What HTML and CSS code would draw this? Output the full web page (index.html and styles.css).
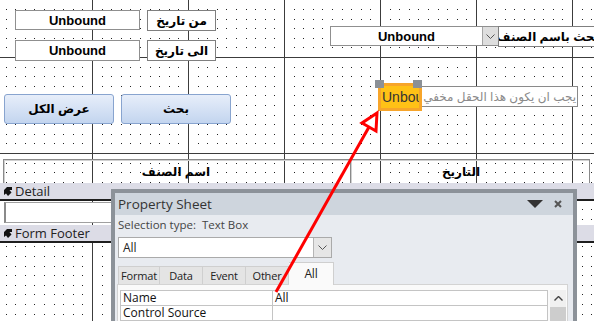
FILE: index.html
```html
<!DOCTYPE html>
<html>
    <head>
        <title>Form Design View</title>
        <meta charset="utf-8"/>
        <link rel="stylesheet" href="styles.css">
    </head>
    <body>
        <svg class="defs" width="0" height="0">
            <defs>
                <g id="dotRow">
                    <rect x="0" y="0" width="1" height="1"/><rect x="10" y="0" width="1" height="1"/>
                    <rect x="19" y="0" width="1" height="1"/><rect x="29" y="0" width="1" height="1"/>
                    <rect x="38" y="0" width="1" height="1"/><rect x="48" y="0" width="1" height="1"/>
                    <rect x="58" y="0" width="1" height="1"/><rect x="67" y="0" width="1" height="1"/>
                    <rect x="77" y="0" width="1" height="1"/><rect x="86" y="0" width="1" height="1"/>
                </g>
                <g id="dotTile" fill="#222">
                    <use href="#dotRow"/><use href="#dotRow" y="10"/><use href="#dotRow" y="19"/>
                    <use href="#dotRow" y="29"/><use href="#dotRow" y="38"/><use href="#dotRow" y="48"/>
                    <use href="#dotRow" y="58"/><use href="#dotRow" y="67"/><use href="#dotRow" y="77"/>
                    <use href="#dotRow" y="86"/>
                </g>
                <pattern id="gridHead" x="92" y="57" width="96" height="96" patternUnits="userSpaceOnUse">
                    <use href="#dotTile"/>
                    <rect x="0" y="0" width="1" height="96" fill="#3c3c3c"/>
                    <rect x="0" y="0" width="96" height="1" fill="#3c3c3c"/>
                </pattern>
                <pattern id="gridDetail" x="92" y="8" width="96" height="96" patternUnits="userSpaceOnUse">
                    <use href="#dotTile"/>
                    <rect x="0" y="-8" width="1" height="120" fill="#3c3c3c"/>
                </pattern>
                <pattern id="gridFoot" x="92" y="13" width="96" height="96" patternUnits="userSpaceOnUse">
                    <use href="#dotTile"/>
                    <rect x="0" y="-13" width="1" height="120" fill="#3c3c3c"/>
                </pattern>
            </defs>
        </svg>

        <div class="design">
            <div class="section header">
                <svg class="grid" width="594" height="183"><rect width="594" height="183" fill="url(#gridHead)"/></svg>

                <div class="ctl txt tb-from">Unbound</div>
                <div class="ctl lbl lb-from">من تاريخ</div>
                <div class="ctl txt tb-to">Unbound</div>
                <div class="ctl lbl lb-to">الى تاريخ</div>

                <div class="ctl btn btn-all">عرض الكل</div>
                <div class="ctl btn btn-search">بحث</div>

                <div class="ctl combo">
                    <span class="combo-val">Unbound</span>
                    <span class="combo-drop">
                        <svg width="9" height="5" viewBox="0 0 9 5"><path d="M0.5 0.5 L4.5 4.5 L8.5 0.5" fill="none" stroke="#555" stroke-width="1"/></svg>
                    </span>
                </div>
                <div class="ctl lbl lb-cat">بحث باسم الصنف</div>

                <div class="ctl lbl lb-hint">يجب ان يكون هذا الحقل مخفي</div>
                <div class="ctl sel">
                    <span class="sel-fill">Unbound</span>
                    <span class="handle h-left"></span>
                    <span class="handle h-right"></span>
                </div>

                <div class="frame frame-a"></div>
                <div class="frame frame-b"></div>
                <div class="ctl col-lbl col-name">اسم الصنف</div>
                <div class="ctl col-lbl col-date">التاريخ</div>
            </div>

            <div class="bar">
                <svg class="bar-icon" width="10" height="9" viewBox="0 0 10 9"><path d="M1 3 L4 0 L9 0 L9 3 L6.5 3 L8.5 5.5 L5 9 L3 6.5 L1 8 Z" fill="#111"/></svg>
                Detail
            </div>
            <div class="section detail">
                <svg class="grid" width="594" height="24"><rect width="594" height="24" fill="url(#gridDetail)"/></svg>
                <div class="detail-box"></div>
            </div>

            <div class="bar">
                <svg class="bar-icon" width="10" height="9" viewBox="0 0 10 9"><path d="M1 3 L4 0 L9 0 L9 3 L6.5 3 L8.5 5.5 L5 9 L3 6.5 L1 8 Z" fill="#111"/></svg>
                Form Footer
            </div>
            <div class="section footer">
                <svg class="grid" width="594" height="90"><rect width="594" height="90" fill="url(#gridFoot)"/></svg>
            </div>

            <div class="props">
                <div class="props-title">
                    <span>Property Sheet</span>
                    <span class="props-tools">
                        <svg width="16" height="8" viewBox="0 0 16 8"><path d="M0 0 H16 L8 8 Z" fill="#333"/></svg>
                        <svg width="8" height="8" viewBox="0 0 8 8"><path d="M1 1 L7 7 M7 1 L1 7" stroke="#555" stroke-width="2"/></svg>
                    </span>
                </div>
                <div class="sel-type">Selection type:&nbsp; Text Box</div>
                <div class="props-combo">
                    <span class="combo-val">All</span>
                    <span class="combo-drop">
                        <svg width="9" height="5" viewBox="0 0 9 5"><path d="M0.5 0.5 L4.5 4.5 L8.5 0.5" fill="none" stroke="#555" stroke-width="1"/></svg>
                    </span>
                </div>
                <div class="tabs">
                    <span class="tab t-format">Format</span>
                    <span class="tab">Data</span>
                    <span class="tab">Event</span>
                    <span class="tab">Other</span>
                    <span class="tab active">All</span>
                </div>
                <div class="pane">
                    <div class="prop-grid">
                        <div class="prop-row"><span>Name</span><span>All</span></div>
                        <div class="prop-row"><span>Control Source</span><span></span></div>
                        <div class="prop-row"><span></span><span></span></div>
                    </div>
                    <div class="scroll">
                        <span class="scroll-up">
                            <svg width="9" height="5" viewBox="0 0 9 5"><path d="M0.5 4.5 L4.5 0.5 L8.5 4.5" fill="none" stroke="#444" stroke-width="1.4"/></svg>
                        </span>
                        <span class="thumb"></span>
                    </div>
                </div>
            </div>

            <svg class="arrow" width="594" height="321">
                <line x1="276" y1="292" x2="369" y2="127" stroke="#f00" stroke-width="3"/>
                <polygon points="377,113 362,123 376,131" fill="#fff" stroke="#f00" stroke-width="3"/>
            </svg>
        </div>
    </body>
</html>
```

FILE: styles.css
```css
*{
    box-sizing: border-box;
}
body{
    margin: 0;
}
.defs{
    position: absolute;
}
.design{
    position: relative;
    width: 594px;
    height: 321px;
    overflow: hidden;
    background: #fff;
    font-family: "Liberation Sans", "DejaVu Sans", sans-serif;
}
.section{
    position: relative;
    background: #fff;
    overflow: hidden;
}
.grid{
    position: absolute;
    left: 0;
    top: 0;
    shape-rendering: crispEdges;
}
.header{
    height: 183px;
}
.detail{
    height: 26px;
    border-top: 2px solid #1e1e1e;
}
.footer{
    height: 96px;
    border-top: 2px solid #1e1e1e;
}

/* section bars */
.bar{
    height: 16px;
    display: flex;
    align-items: center;
    gap: 2px;
    padding-left: 3px;
    background: #dcdce6;
    color: #222;
    font: 13px "Open Sans", sans-serif;
}
.bar-icon{
    flex: none;
}

/* controls on the design canvas */
.ctl{
    position: absolute;
    display: flex;
    align-items: center;
    justify-content: center;
    font-size: 13px;
    font-weight: bold;
    color: #000;
    white-space: nowrap;
    overflow: hidden;
}
.txt{
    background: #fff;
    border: 1px solid #8f8f8f;
}
.lbl{
    background: #fff;
    border: 1px solid #7f7f7f;
    direction: rtl;
    font-size: 12px;
}
.tb-from{ left: 15px; top: 10px; width: 125px; height: 20px; }
.lb-from{ left: 147px; top: 10px; width: 69px; height: 21px; }
.tb-to{ left: 15px; top: 40px; width: 125px; height: 21px; }
.lb-to{ left: 147px; top: 40px; width: 69px; height: 21px; }

.btn{
    border: 1px solid #88a4cf;
    border-radius: 3px;
    background: linear-gradient(#e7eefa, #c3d5ef);
    font-size: 12px;
}
.btn-all{ left: 4px; top: 94px; width: 110px; height: 30px; }
.btn-search{ left: 121px; top: 94px; width: 110px; height: 30px; }

.combo{
    left: 330px;
    top: 26px;
    width: 169px;
    height: 20px;
    background: #fff;
    border: 1px solid #8f8f8f;
    justify-content: flex-start;
}
.combo-val{
    flex: 1;
    text-align: center;
}
.combo-drop{
    width: 16px;
    height: 100%;
    display: flex;
    align-items: center;
    justify-content: center;
    background: #dedede;
    border-left: 1px solid #a5a5a5;
}
.lb-cat{
    left: 498px;
    top: 26px;
    width: 104px;
    height: 21px;
    justify-content: flex-start;
    padding-right: 2px;
}

.lb-hint{
    left: 420px;
    top: 86px;
    width: 158px;
    height: 21px;
    border-color: #8a8a8a;
    color: #8a8a8a;
    font-weight: normal;
    font-size: 12px;
    justify-content: flex-start;
    padding-right: 1px;
}
.sel{
    left: 378px;
    top: 83px;
    width: 44px;
    height: 28px;
    overflow: visible;
    background: #f7a52a;
    padding: 3px;
}
.sel-fill{
    display: block;
    width: 38px;
    height: 22px;
    background: #ffc116;
    color: #333;
    font-size: 14px;
    font-weight: normal;
    line-height: 22px;
    padding-left: 1px;
    overflow: hidden;
}
.handle{
    position: absolute;
    top: -3px;
    width: 9px;
    height: 8px;
    background: #8b9096;
}
.h-left{ left: -3px; }
.h-right{ right: 0; }

.frame{
    position: absolute;
    top: 159px;
    height: 26px;
    border-top: 1px solid #8a8a8a;
    border-left: 1px solid #8a8a8a;
    box-shadow: inset 1px 1px 0 #d0d0d0;
}
.frame-a{ left: 3px; width: 347px; }
.frame-b{ left: 350px; width: 240px; border-right: 1px solid #8a8a8a; }
.col-lbl{
    top: 163px;
    height: 17px;
    width: 100px;
    direction: rtl;
    font-size: 12px;
}
.col-name{ left: 126px; }
.col-date{ left: 411px; }

.detail-box{
    position: absolute;
    left: 4px;
    top: 1px;
    width: 560px;
    height: 21px;
    background: #fff;
    border: 1px solid #a0a0a0;
    border-left: 2px solid #8a8a8a;
}

/* property sheet window */
.props{
    position: absolute;
    left: 111px;
    top: 189px;
    width: 466px;
    height: 140px;
    border: 4px solid #8c9299;
    border-bottom: 0;
    background: #e8ebf0;
    font-family: "Open Sans", sans-serif;
    color: #333;
}
.props-title{
    height: 22px;
    display: flex;
    align-items: center;
    justify-content: space-between;
    padding: 0 11px 0 3px;
    background: #ced5dd;
    font-size: 13.5px;
}
.props-tools{
    display: flex;
    align-items: center;
    gap: 11px;
}
.sel-type{
    height: 20px;
    line-height: 20px;
    padding-left: 3px;
    font-size: 11.5px;
    color: #444;
}
.props-combo{
    display: flex;
    margin: 2px 0 0 3px;
    width: 214px;
    height: 21px;
    background: #fff;
    border: 1px solid #aaa;
    font-size: 12px;
    color: #222;
}
.props-combo .combo-val{
    text-align: left;
    padding-left: 4px;
    line-height: 19px;
}
.props-combo .combo-drop{
    width: 18px;
    background: #e6e6e6;
    border-left: 1px solid #b5b5b5;
}
.tabs{
    display: flex;
    align-items: flex-end;
    height: 22px;
    margin: 4px 0 0 3px;
}
.tab{
    width: 43px;
    height: 18px;
    display: flex;
    align-items: center;
    justify-content: center;
    background: #e4e4e4;
    border: 1px solid #cfcfcf;
    border-bottom: 0;
    border-left: 0;
    font-size: 11px;
    letter-spacing: -0.2px;
    color: #222;
}
.t-format{
    width: 42px;
    border-left: 1px solid #cfcfcf;
}
.tab.active{
    width: 45px;
    height: 23px;
    margin-bottom: -1px;
    background: #fafafa;
    position: relative;
    align-items: flex-start;
    padding-top: 2px;
    font-size: 12px;
}
.pane{
    display: flex;
    gap: 2px;
    width: 451px;
    height: 40px;
    margin-left: 2px;
    padding: 5px 1px 0 2px;
    background: #fafafa;
    border: 1px solid #d3d3d3;
}
.prop-grid{
    width: 428px;
    border-left: 1px solid #c4c4c4;
    border-top: 1px solid #c4c4c4;
}
.prop-row{
    display: grid;
    grid-template-columns: 152px 1fr;
    height: 15px;
    border-bottom: 1px solid #c4c4c4;
    background: #fff;
    font-size: 12px;
    line-height: 14px;
    color: #111;
}
.prop-row span{
    padding-left: 2px;
    border-right: 1px solid #c4c4c4;
}
.scroll{
    width: 16px;
    display: flex;
    flex-direction: column;
    background: #f0f0f0;
}
.scroll-up{
    height: 17px;
    display: flex;
    align-items: center;
    justify-content: center;
}
.thumb{
    flex: 1;
    background: #cdcdcd;
}

.arrow{
    position: absolute;
    left: 0;
    top: 0;
    pointer-events: none;
}
```
